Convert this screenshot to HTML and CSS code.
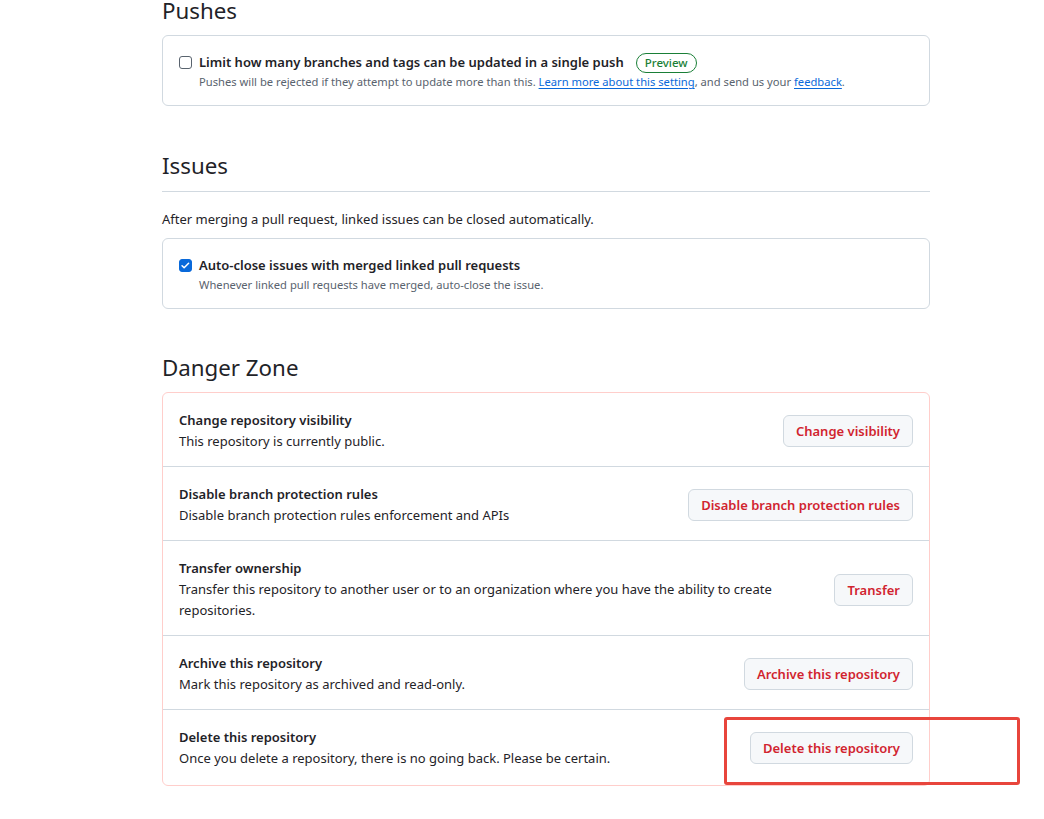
FILE: index.html
```html
<!DOCTYPE html>
<html lang="en">
<head>
<meta charset="utf-8">
<title>Settings</title>
<link rel="stylesheet" href="styles.css">
</head>
<body>
<main class="page">
  <h2 class="subhead plain">Pushes</h2>
  <div class="box">
    <div class="check-row">
      <span class="checkbox"></span>
      <div class="check-body">
        <div class="check-title">Limit how many branches and tags can be updated in a single push <span class="badge">Preview</span></div>
        <div class="check-note">Pushes will be rejected if they attempt to update more than this. <a href="#">Learn more about this setting</a>, and send us your <a href="#">feedback</a>.</div>
      </div>
    </div>
  </div>

  <h2 class="subhead ruled">Issues</h2>
  <p class="lead">After merging a pull request, linked issues can be closed automatically.</p>
  <div class="box">
    <div class="check-row">
      <span class="checkbox checked"><svg viewBox="0 0 16 16" width="11" height="11"><path d="M3 8.3l3 3 6.5-6.6" fill="none" stroke="#fff" stroke-width="2.2" stroke-linecap="round" stroke-linejoin="round"/></svg></span>
      <div class="check-body">
        <div class="check-title">Auto-close issues with merged linked pull requests</div>
        <div class="check-note">Whenever linked pull requests have merged, auto-close the issue.</div>
      </div>
    </div>
  </div>

  <h2 class="subhead plain danger-head">Danger Zone</h2>
  <div class="danger-box">
    <div class="danger-row">
      <div class="danger-text">
        <div class="danger-title">Change repository visibility</div>
        <div class="danger-desc">This repository is currently public.</div>
      </div>
      <button class="btn-danger">Change visibility</button>
    </div>
    <div class="danger-row">
      <div class="danger-text">
        <div class="danger-title">Disable branch protection rules</div>
        <div class="danger-desc">Disable branch protection rules enforcement and APIs</div>
      </div>
      <button class="btn-danger">Disable branch protection rules</button>
    </div>
    <div class="danger-row">
      <div class="danger-text">
        <div class="danger-title">Transfer ownership</div>
        <div class="danger-desc">Transfer this repository to another user or to an organization where you have the ability to create repositories.</div>
      </div>
      <button class="btn-danger">Transfer</button>
    </div>
    <div class="danger-row">
      <div class="danger-text">
        <div class="danger-title">Archive this repository</div>
        <div class="danger-desc">Mark this repository as archived and read-only.</div>
      </div>
      <button class="btn-danger">Archive this repository</button>
    </div>
    <div class="danger-row last">
      <div class="danger-text">
        <div class="danger-title">Delete this repository</div>
        <div class="danger-desc">Once you delete a repository, there is no going back. Please be certain.</div>
      </div>
      <button class="btn-danger">Delete this repository</button>
      <span class="highlight"></span>
    </div>
  </div>
</main>
</body>
</html>
```

FILE: styles.css
```css
* { box-sizing: border-box; }
html, body { margin: 0; padding: 0; background: #ffffff; }
body {
  font-family: "Noto Sans", "Liberation Sans", sans-serif;
  color: #1f2328;
  font-size: 13px;
  line-height: 21px;
  overflow: hidden;
}
.page {
  width: 768px;
  margin: -7px 0 0 162px;
}
.subhead {
  font-size: 22.3px;
  font-weight: 400;
  line-height: 36px;
  margin: 0;
  padding-bottom: 6px;
}
.subhead.ruled {
  margin-top: 42px;
  padding-bottom: 7px;
  border-bottom: 1px solid #d1d9e0;
}
.danger-head { margin-top: 41px; padding-bottom: 6px; }
.lead { margin: 17px 0 8px; font-size: 13px; line-height: 21px; }
.box {
  border: 1px solid #d1d9e0;
  border-radius: 6px;
  padding: 16px 16px 14px;
}
.check-row { display: flex; align-items: flex-start; gap: 7px; }
.checkbox {
  flex: none;
  width: 13px; height: 13px;
  margin-top: 4px;
  border: 1px solid #59636e;
  border-radius: 3px;
  display: flex; align-items: center; justify-content: center;
  background: #fff;
}
.checkbox.checked { background: #0969da; border-color: #0969da; }
.check-title { font-weight: 600; font-size: 13px; line-height: 21px; display: flex; align-items: center; }
.badge {
  display: inline-block;
  margin-left: 12px;
  border: 1px solid #1a7f37;
  color: #1a7f37;
  border-radius: 999px;
  font-size: 11.5px;
  font-weight: 500;
  line-height: 18px;
  padding: 0 8px;
}
.check-note { font-size: 11.2px; line-height: 18px; color: #59636e; }
.check-note a { color: #0969da; text-decoration: underline; text-underline-offset: 2px; }
.danger-box {
  border: 1px solid #ffcecb;
  border-radius: 6px;
}
.danger-row {
  position: relative;
  display: flex;
  align-items: center;
  gap: 16px;
  padding: 17px 16px 14px;
  border-top: 1px solid #d1d9e0;
}
.danger-row:first-child { border-top: 0; }
.danger-row.last { padding-bottom: 16px; }
.danger-text { flex: 1 1 auto; }
.danger-title { font-weight: 600; line-height: 21px; }
.danger-desc { line-height: 21px; }
.btn-danger {
  flex: none;
  height: 32px;
  padding: 0 12px;
  font-family: inherit;
  font-size: 13px;
  font-weight: 600;
  color: #d1242f;
  background: #f6f8fa;
  border: 1px solid #d1d9e0;
  border-radius: 6px;
}
.highlight {
  position: absolute;
  left: 561px;
  top: 7px;
  width: 296px;
  height: 68px;
  border: 3px solid #e8453c;
  border-radius: 3px;
  pointer-events: none;
}
```
